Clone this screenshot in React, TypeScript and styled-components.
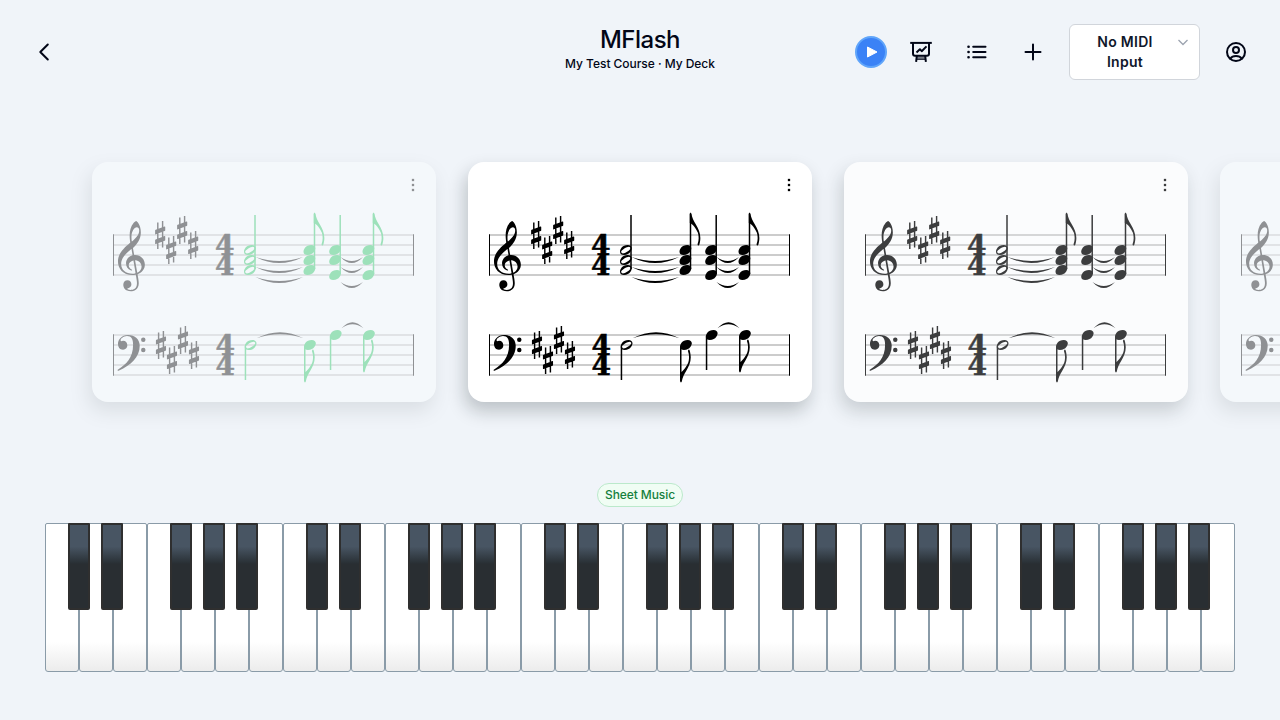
import React from 'react';
import styled, { createGlobalStyle } from 'styled-components';

const Global = createGlobalStyle`
  * { box-sizing: border-box; }
  html, body { margin: 0; padding: 0; }
  body {
    background: #f0f4f9;
    color: #020617;
    font-family: Inter, 'Liberation Sans', sans-serif;
    overflow: hidden;
  }
`;

const Page = styled.main`
  display: flex;
  flex-direction: column;
  width: 1280px;
  height: 720px;
  overflow: hidden;
`;

const Header = styled.header`
  display: grid;
  grid-template-columns: 1fr auto 1fr;
  align-items: center;
  height: 104px;
  padding: 0 28px;
`;

const Actions = styled.div`
  display: flex;
  align-items: center;
  justify-content: flex-end;
`;

const IconButton = styled.button<{ $gapBefore?: number }>`
  display: flex;
  align-items: center;
  justify-content: center;
  width: 32px;
  height: 32px;
  padding: 0;
  border: 0;
  background: none;
  color: #020617;
  margin-left: ${(p) => p.$gapBefore ?? 0}px;
`;

const PlayButton = styled(IconButton)`
  border: 2px solid #60a5fa;
  border-radius: 50%;
  background: #3b82f6;
  color: #fff;
`;

const Titles = styled.div`
  display: flex;
  flex-direction: column;
  align-items: center;
  padding-bottom: 8px;
`;

const Title = styled.h1`
  margin: 0;
  font-size: 24px;
  font-weight: 500;
  line-height: 32px;
  letter-spacing: -0.5px;
`;

const Subtitle = styled.p`
  margin: 0;
  font-size: 12px;
  font-weight: 500;
  line-height: 16px;
  letter-spacing: -0.04px;
`;

const Select = styled.button`
  display: flex;
  align-items: flex-start;
  width: 131px;
  height: 56px;
  margin-left: 20px;
  padding: 7px 8px 7px 15px;
  border: 1px solid #d1d5db;
  border-radius: 6px;
  background: #fff;
  color: #0f172a;
  font: 600 14px/20px Inter, sans-serif;
  letter-spacing: 0.28px;
  text-align: center;
`;

const SelectLabel = styled.span`
  flex: 1;
  padding-left: 7px;
  padding-right: 17px;
`;

const Carousel = styled.section`
  display: flex;
  gap: 32px;
  height: 240px;
  margin-top: 58px;
  padding-left: 92px;
`;

const Card = styled.article<{ $opacity: number }>`
  display: flex;
  flex: none;
  flex-direction: column;
  width: 344px;
  height: 240px;
  border-radius: 16px;
  background: ${(p) => (p.$opacity < 0.5 ? '#fcffff' : '#fff')};
  box-shadow: -3px 9px 18px rgba(15, 26, 30, 0.23);
  opacity: ${(p) => p.$opacity};
`;

const CardBar = styled.div`
  display: flex;
  justify-content: flex-end;
  height: 40px;
  padding: 15px 15px 0 0;
`;

const Score = styled.svg`
  display: block;
  width: 344px;
  height: 200px;
`;

const Mode = styled.div`
  display: flex;
  justify-content: center;
  margin-top: 81px;
`;

const Badge = styled.span`
  width: 86px;
  height: 24px;
  border: 1px solid #bbe9cb;
  border-radius: 12px;
  background: #f0fdf4;
  color: #15803d;
  font-size: 12px;
  font-weight: 500;
  line-height: 22px;
  letter-spacing: -0.08px;
  text-align: center;
`;

const Keyboard = styled.div`
  position: relative;
  display: flex;
  width: 1190px;
  height: 149px;
  margin: 16px auto 0;
`;

const WhiteKey = styled.div`
  flex: 1;
  border: 1px solid #8a9ba8;
  border-radius: 2px 2px 3px 3px;
  background: linear-gradient(#fff 80%, #ececec);
`;

const BlackKey = styled.div<{ $x: number }>`
  position: absolute;
  top: 0;
  left: ${(p) => p.$x}px;
  width: 22px;
  height: 86.5px;
  border: 2px solid #2f2f2f;
  border-radius: 1px 1px 2px 2px;
  background: linear-gradient(#485563 26%, #293035 46%, #292e32 47%);
`;

const G_CLEF =
  'M376 415l25 -145c3 -18 3 -18 29 -18c147 0 241 -113 241 -241c0 -113 -67 -198 -168 -238c-14 -6 -15 -5 -13 -17c11 -62 29 -157 29 -214c0 -170 -130 -200 -197 -200c-151 0 -190 98 -190 163c0 62 40 115 107 115c61 0 96 -47 96 -102c0 -58 -36 -85 -67 -94c-23 -7 -32 -10 -32 -17c0 -13 26 -29 80 -29c59 0 158 18 158 166c0 47 -15 134 -27 201c-2 12 -4 11 -15 9c-20 -4 -46 -6 -69 -6c-245 0 -364 165 -364 339c0 202 153 345 297 464c12 10 11 12 9 24c-7 41 -14 106 -14 164c0 104 24 229 98 311c20 22 51 48 65 48c11 0 37 -28 52 -50c41 -60 65 -146 65 -233c0 -153 -82 -280 -190 -381c-6 -6 -8 -7 -6 -19zM470 943c-61 0 -133 -96 -133 -252c0 -32 2 -66 6 -92c2 -13 6 -14 13 -8c79 69 174 159 174 270c0 55 -27 82 -60 82zM361 262l-21 128c-2 11 -4 12 -14 4c-47 -38 -93 -75 -153 -142c-83 -94 -93 -173 -93 -232c0 -139 113 -236 288 -236c20 0 40 2 56 5c15 3 16 3 14 14l-50 298c-2 11 -4 12 -20 8c-61 -17 -100 -60 -100 -117c0 -46 30 -89 72 -107c7 -3 15 -6 15 -13c0 -6 -4 -11 -12 -11c-7 0 -19 3 -27 6c-68 23 -115 87 -115 177c0 85 57 164 145 194c18 6 18 5 15 24zM430 103l49 -285c2 -12 4 -12 16 -6c56 28 94 79 94 142c0 88 -67 156 -148 163c-12 1 -13 -2 -11 -14z';
const F_CLEF =
  'M252 252c-168 0 -252 -124 -252 -219c0 -81 41 -149 126 -149c73 0 107 55 107 112c0 60 -40 108 -106 108c-20 0 -36 -8 -46 -8c-12 0 -17 9 -17 20c0 35 68 109 161 109c110 0 152 -80 152 -216c0 -334 -179 -486 -374 -622c-10 -7 -13 -11 -13 -17c0 -8 6 -13 14 -13c5 0 13 2 22 7c290 130 517 329 517 618c0 162 -118 270 -291 270zM632 188a56 56 0 1 0 0 -112a56 56 0 1 0 0 112zM632 -70a56 56 0 1 0 0 -112a56 56 0 1 0 0 112z';
const SHARP =
  'M47 -350h36v661h-36zM167 -311h36v661h-36zM-2 28c0 -12 8 -16 18 -12l221 82c9 3 14 8 14 18v84c0 12 -8 16 -18 12l-221 -82c-9 -3 -14 -8 -14 -18zM-2 -212c0 -12 8 -16 18 -12l221 82c9 3 14 8 14 18v84c0 12 -8 16 -18 12l-221 -82c-9 -3 -14 -8 -14 -18z';
const HEAD = 'M97 -125c-55 0 -97 30 -97 83c0 52 47 167 196 167c58 0 99 -32 99 -83c0 -33 -33 -167 -198 -167z';
const HALF_HEAD =
  HEAD +
  'M75 -87c48 0 189 88 189 131c0 7 -3 13 -6 19c-7 12 -18 21 -37 21c-47 0 -192 -79 -192 -128c0 -7 3 -14 6 -20c7 -12 19 -23 40 -23z';
const FLAG =
  'M238 -790c-5 -17 -22 -23 -28 -19s-16 13 -16 29c0 4 1 9 3 15c17 45 24 92 24 137c0 59 -9 116 -24 150c-36 85 -131 221 -197 233v239c0 12 8 15 19 15c10 0 18 -6 21 -22c16 -96 58 -182 109 -261c63 -100 115 -218 115 -343c0 -78 -26 -173 -26 -173z';

type Mark = [x: number, y: number];

type GlyphProps = { d: string; x: number; y: number; flip?: boolean; rule?: 'evenodd' | 'nonzero' };

/** Music symbol drawn at 0.04px per font unit, y axis pointing up unless flipped. */
const Glyph = ({ d, x, y, flip, rule = 'evenodd' }: GlyphProps) => (
  <path d={d} fillRule={rule} transform={`translate(${x} ${y}) scale(.04 ${flip ? 0.04 : -0.04})`} />
);

const Tie = ({ x1, x2, y, dir }: { x1: number; x2: number; y: number; dir: 1 | -1 }) => {
  const m = (x1 + x2) / 2;
  return <path d={`M${x1} ${y}Q${m} ${y + 12 * dir} ${x2} ${y}Q${m} ${y + 8 * dir} ${x1} ${y}Z`} />;
};

const Stem = ({ x, y1, y2 }: { x: number; y1: number; y2: number }) => (
  <path d={`M${x} ${y1}V${y2}`} stroke="currentColor" strokeWidth="1.5" />
);

const trebleSharps: Mark[] = [[63.2, 73], [74.2, 88], [85.2, 68], [96.2, 83]];
const bassSharps: Mark[] = [[64, 183], [75, 198], [86, 178], [97, 193]];

const Stave = ({ y }: { y: number }) => (
  <g>
    {[0, 10, 20, 30, 40].map((d) => (
      <path key={d} d={`M21 ${y + d}H322`} stroke="#999" strokeWidth="1" />
    ))}
    <rect x="21" y={y - 0.7} width="1" height="41.4" />
    <rect x="321" y={y - 0.7} width="1" height="41.4" />
  </g>
);

const Meter = ({ x, y }: { x: number; y: number }) => (
  <g
    fontFamily="'DejaVu Serif', serif"
    fontWeight="700"
    fontSize="27"
    stroke="currentColor"
    strokeWidth=".5"
  >
    <text transform={`translate(${x} ${y + 19.8}) scale(1.04 1)`}>4</text>
    <text transform={`translate(${x} ${y + 39.8}) scale(1.04 1)`}>4</text>
  </g>
);

const chords: { x: number; ys: number[]; half?: boolean; flag?: boolean }[] = [
  { x: 152, ys: [88, 98, 108], half: true },
  { x: 211.5, ys: [88, 98, 108], flag: true },
  { x: 237.2, ys: [88, 98, 113] },
  { x: 270.5, ys: [88, 98, 113], flag: true },
];

const bassNotes: { x: number; y: number; end: number; half?: boolean; flag?: boolean }[] = [
  { x: 152.7, y: 183, end: 218, half: true },
  { x: 212, y: 183, end: 219, flag: true },
  { x: 237.8, y: 173, end: 208 },
  { x: 271, y: 173, end: 209, flag: true },
];

const SheetMusic = ({ noteColor }: { noteColor: string }) => (
  <Score viewBox="0 40 344 200" fill="currentColor" color="#000">
    <Stave y={73} />
    <Stave y={173} />
    <Glyph d={G_CLEF} x={26} y={103} />
    <Glyph d={F_CLEF} x={26} y={183} />
    {[...trebleSharps, ...bassSharps].map(([x, y]) => (
      <Glyph key={`${x}-${y}`} d={SHARP} x={x} y={y} rule="nonzero" />
    ))}
    <Meter x={122.9} y={73} />
    <Meter x={123.6} y={173} />
    {[95, 105, 115].map((y) => (
      <Tie key={y} x1={163.5} x2={211} y={y} dir={1} />
    ))}
    {[95, 105, 120].map((y) => (
      <Tie key={y} x1={248.5} x2={271} y={y} dir={1} />
    ))}
    <Tie x1={164.5} x2={211.5} y={176.3} dir={-1} />
    <Tie x1={249.5} x2={271.5} y={166.2} dir={-1} />
    <g color={noteColor} fill={noteColor}>
      {chords.map((c) => (
        <g key={c.x}>
          {c.ys.map((y) => (
            <Glyph key={y} d={c.half ? HALF_HEAD : HEAD} x={c.x} y={y} />
          ))}
          <Stem x={c.x + 11} y1={c.flag ? 52 : 53} y2={c.ys[2] - 1} />
          {c.flag && <Glyph d={FLAG} x={c.x + 10.3} y={51.2} />}
        </g>
      ))}
      {bassNotes.map((n) => (
        <g key={n.x}>
          <Glyph d={n.half ? HALF_HEAD : HEAD} x={n.x} y={n.y} />
          <Stem x={n.x + 0.75} y1={n.y + 1.5} y2={n.end} />
          {n.flag && <Glyph d={FLAG} x={n.x + 0.2} y={n.end + 1} flip />}
        </g>
      ))}
    </g>
  </Score>
);

const FlashCard = ({ opacity, noteColor = '#000' }: { opacity: number; noteColor?: string }) => (
  <Card $opacity={opacity}>
    <CardBar>
      <svg width="16" height="16" viewBox="0 0 16 16" fill="#000" stroke="#000" strokeWidth=".3">
        <rect x="7" y="2" width="2" height="2" />
        <rect x="7" y="7" width="2" height="2" />
        <rect x="7" y="12" width="2" height="2" />
      </svg>
    </CardBar>
    <SheetMusic noteColor={noteColor} />
  </Card>
);

const WHITE_KEYS = Array.from({ length: 35 }, (_, i) => i);
const BLACK_KEYS = [0, 1, 2, 3, 4].flatMap((o) => [23, 56, 125, 158, 191].map((x) => o * 238 + x));

const line = {
  fill: 'none',
  stroke: 'currentColor',
  strokeWidth: 2,
  strokeLinecap: 'round',
  strokeLinejoin: 'round',
} as const;

export default function App() {
  return (
    <Page>
      <Global />
      <Header>
        <IconButton aria-label="Back">
          <svg width="24" height="24" viewBox="0 0 24 24" {...line}>
            <path d="M15.8 4.5L8.3 12l7.5 7.5" />
          </svg>
        </IconButton>
        <Titles>
          <Title>MFlash</Title>
          <Subtitle>My Test Course · My Deck</Subtitle>
        </Titles>
        <Actions>
          <PlayButton aria-label="Play">
            <svg width="20" height="20" viewBox="0 0 20 20" fill="currentColor" stroke="currentColor" strokeLinejoin="round">
              <path d="M6.5 5v10L16 10z" />
            </svg>
          </PlayButton>
          <IconButton aria-label="Statistics" $gapBefore={18}>
            <svg width="24" height="24" viewBox="0 0 24 24" {...line} strokeLinecap="butt">
              <path d="M1.2 2.9H22.8" />
              <path d="M4 3v10.7a2 2 0 0 0 2 2h12a2 2 0 0 0 2-2V3" />
              <path d="M7.5 12.4l3.400-3.200 1.800 2 4.800-4.800" />
              <path d="M7.8 16l-.7 5.800M16.200 16l.7 5.800" />
              <path d="M8 17.800h8" strokeWidth="2.6" strokeOpacity=".5" />
              <path d="M7.500 19.300h9" strokeWidth="1" />
            </svg>
          </IconButton>
          <IconButton aria-label="List" $gapBefore={24}>
            <svg width="24" height="24" viewBox="0 0 24 24" {...line}>
              <path d="M8.2 6.7h12.3M8.2 12h12.3M8.2 17.3h12.3" />
              <path d="M3.5 6.7h.1M3.5 12h.1M3.5 17.3h.1" strokeWidth="2.6" />
            </svg>
          </IconButton>
          <IconButton aria-label="Add" $gapBefore={24}>
            <svg width="24" height="24" viewBox="0 0 24 24" {...line}>
              <path d="M12 4.5v15M4.5 12h15" />
            </svg>
          </IconButton>
          <Select>
            <SelectLabel>No MIDI Input</SelectLabel>
            <svg width="16" height="20" viewBox="0 0 16 20" fill="none" stroke="#9ca3af" strokeWidth="1.3">
              <path d="M3.5 8l4.5 4.5L12.5 8" />
            </svg>
          </Select>
          <IconButton aria-label="Account" $gapBefore={20}>
            <svg width="24" height="24" viewBox="0 0 24 24" {...line}>
              <circle cx="12" cy="12" r="9" />
              <circle cx="12" cy="10" r="3" />
              <path d="M6.2 18.7C7.5 16.8 9.5 16 12 16s4.5.8 5.8 2.7" />
            </svg>
          </IconButton>
        </Actions>
      </Header>
      <Carousel>
        <FlashCard opacity={0.4} noteColor="#22c55e" />
        <FlashCard opacity={1} />
        <FlashCard opacity={0.75} />
        <FlashCard opacity={0.4} />
      </Carousel>
      <Mode>
        <Badge>Sheet Music</Badge>
      </Mode>
      <Keyboard>
        {WHITE_KEYS.map((k) => (
          <WhiteKey key={k} />
        ))}
        {BLACK_KEYS.map((x) => (
          <BlackKey key={x} $x={x} />
        ))}
      </Keyboard>
    </Page>
  );
}
